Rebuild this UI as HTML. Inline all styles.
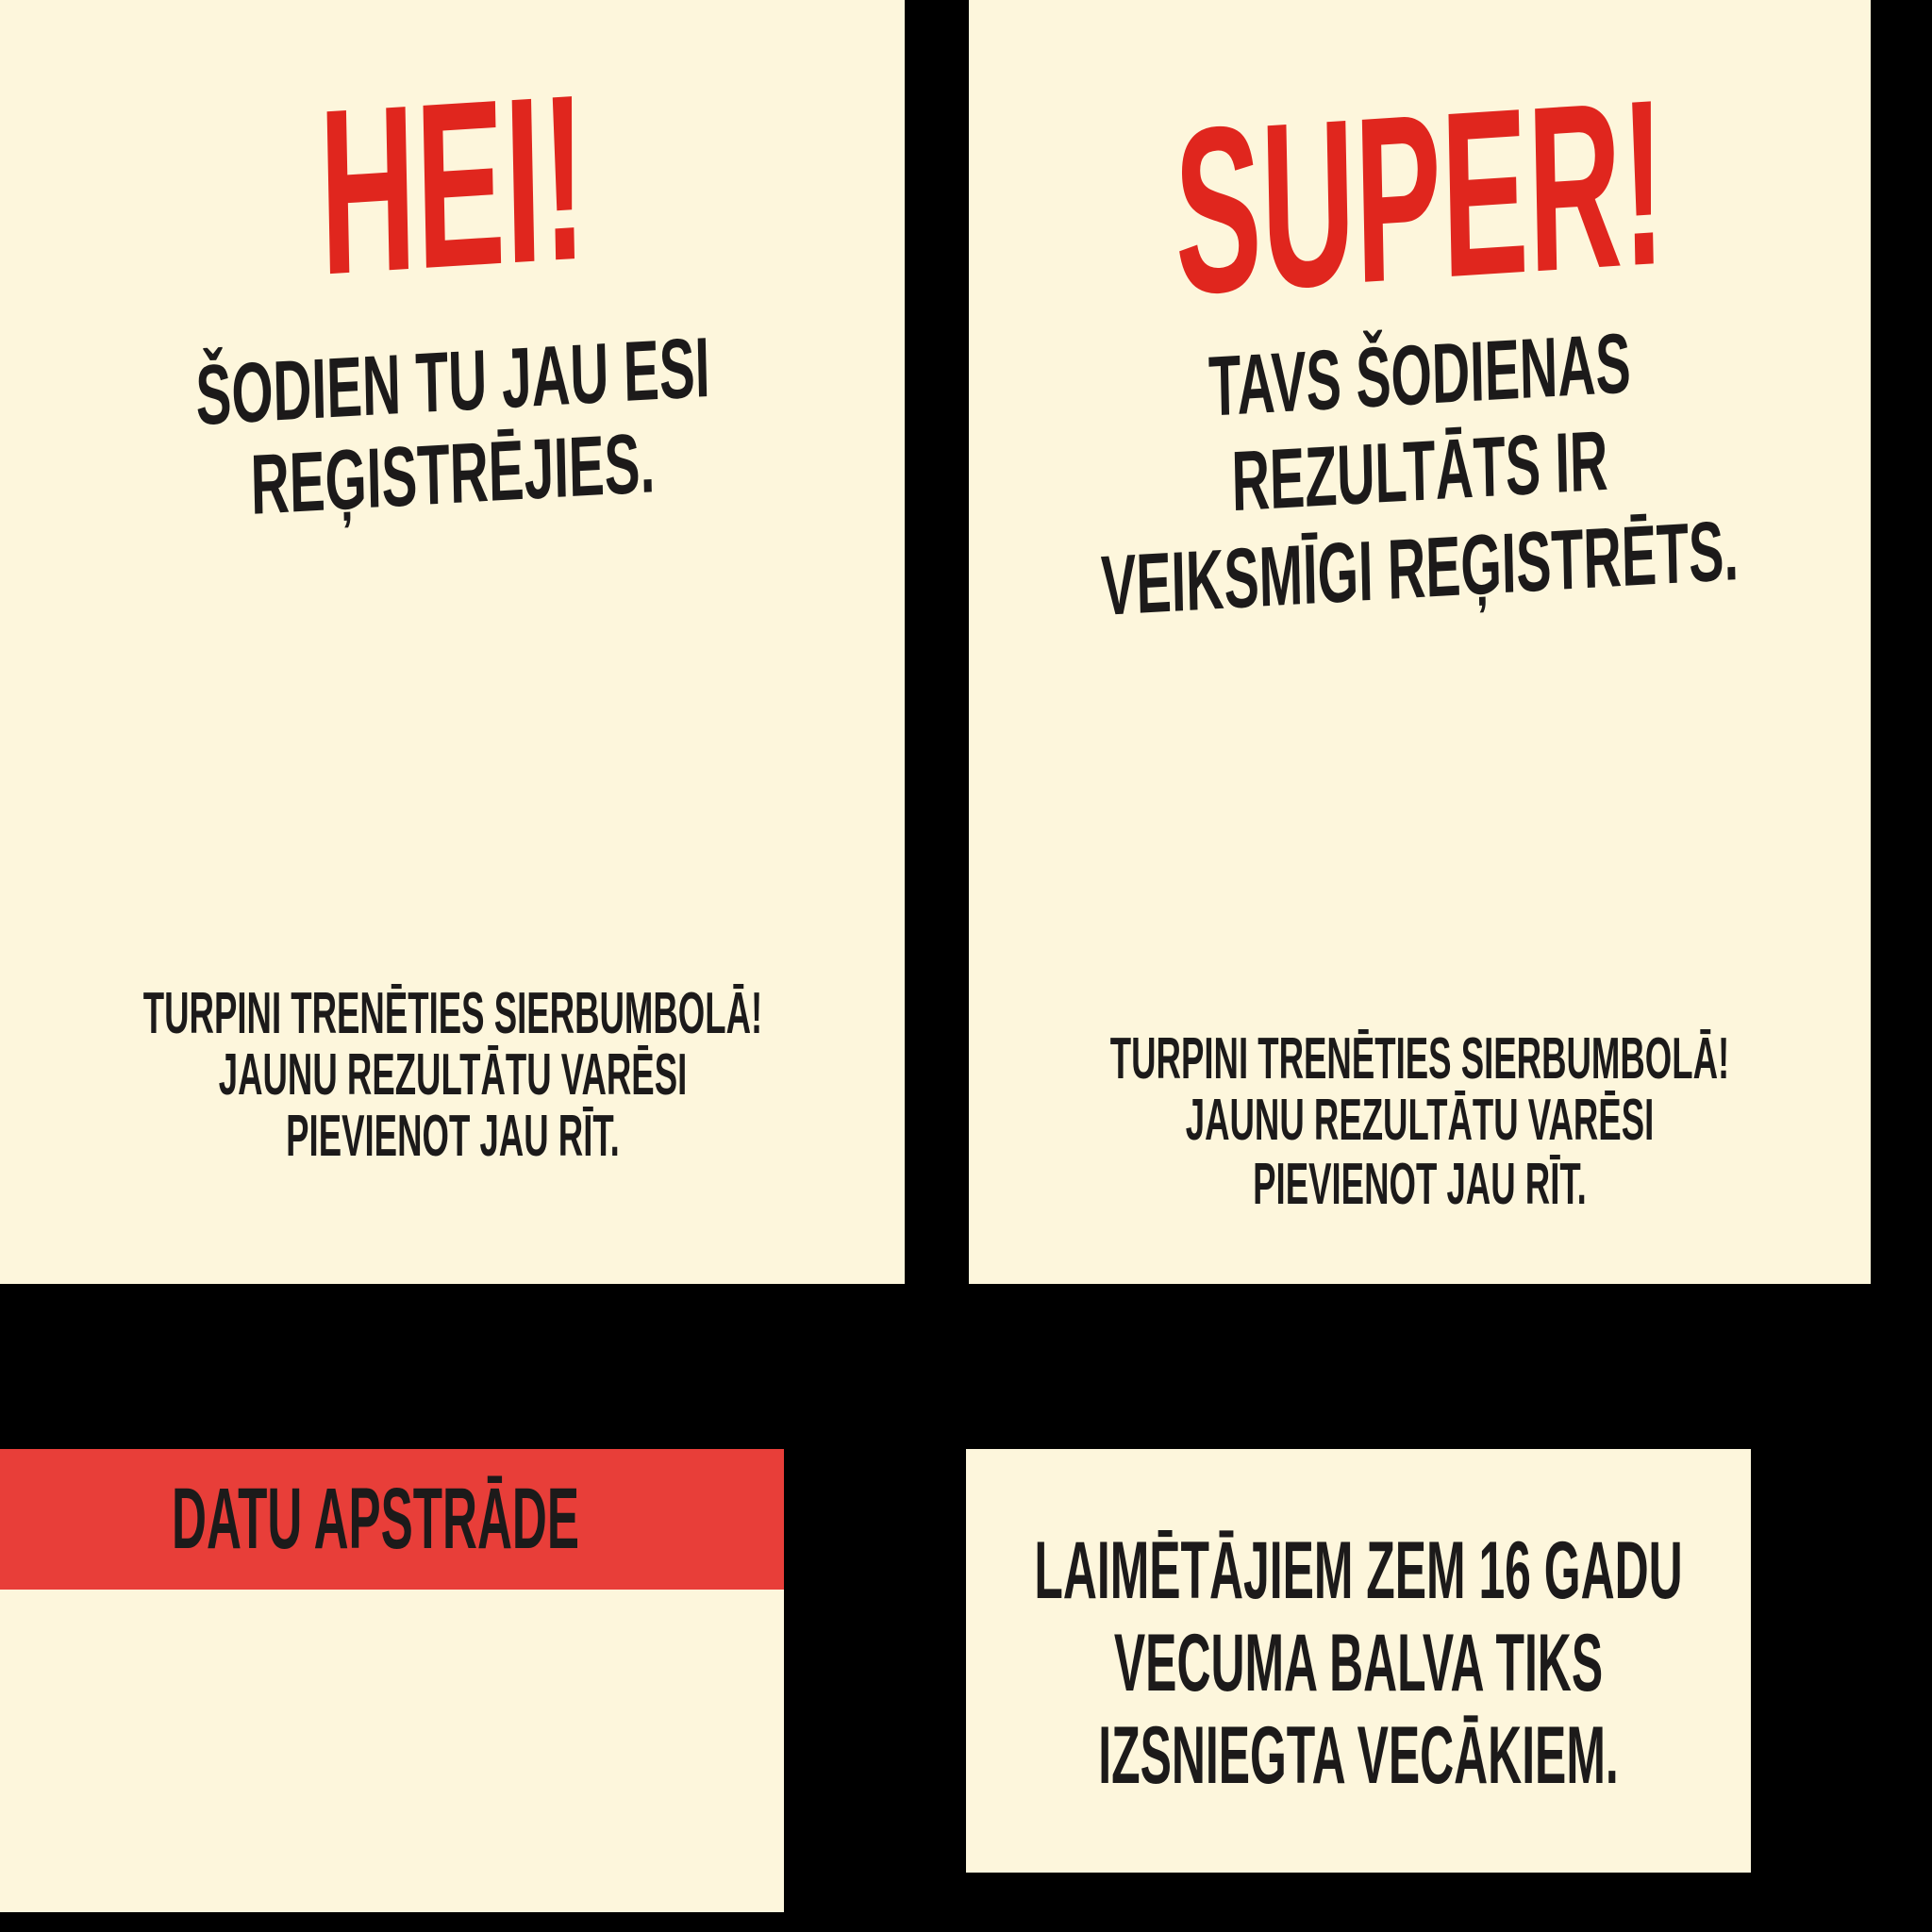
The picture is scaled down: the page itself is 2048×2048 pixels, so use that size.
<!DOCTYPE html>
<html><head><meta charset="utf-8"><style>
html,body{margin:0;padding:0;background:#000;width:2048px;height:2048px;overflow:hidden}
.p{position:absolute;background:#fdf6dc}
.t{position:absolute;left:50%;white-space:nowrap;font-family:"Liberation Sans Narrow","Liberation Sans",sans-serif;font-weight:bold;color:#1c1a1a;line-height:1;transform:translate(-50%,-50%) scaleX(.62)}
.r{color:#e0261e}
</style></head><body>
<div class="p" style="left:0;top:0;width:959px;height:1361px">
  <div class="t r" style="top:196px;font-size:250px;transform:translate(-50%,-50%) scaleX(.565) rotate(-2deg)">HEI!</div>
  <div class="t" style="top:405px;font-size:90px;transform:translate(-50%,-50%) scaleX(.63) rotate(-2deg)">ŠODIEN TU JAU ESI</div>
  <div class="t" style="top:503px;font-size:90px;transform:translate(-50%,-50%) scaleX(.63) rotate(-2deg)">REĢISTRĒJIES.</div>
  <div class="t" style="top:1075px;font-size:62px;transform:translate(-50%,-50%) scaleX(.59)">TURPINI TRENĒTIES SIERBUMBOLĀ!</div>
  <div class="t" style="top:1140px;font-size:62px;transform:translate(-50%,-50%) scaleX(.59)">JAUNU REZULTĀTU VARĒSI</div>
  <div class="t" style="top:1205px;font-size:62px;transform:translate(-50%,-50%) scaleX(.59)">PIEVIENOT JAU RĪT.</div>
</div>
<div class="p" style="left:1027px;top:0;width:956px;height:1361px">
  <div class="t r" style="top:209px;font-size:250px;transform:translate(-50%,-50%) scaleX(.55) rotate(-2deg)">SUPER!</div>
  <div class="t" style="top:398px;font-size:90px;transform:translate(-50%,-50%) scaleX(.62) rotate(-2deg)">TAVS ŠODIENAS</div>
  <div class="t" style="top:500px;font-size:90px;transform:translate(-50%,-50%) scaleX(.62) rotate(-2deg)">REZULTĀTS IR</div>
  <div class="t" style="top:603px;font-size:90px;transform:translate(-50%,-50%) scaleX(.62) rotate(-2deg)">VEIKSMĪGI REĢISTRĒTS.</div>
  <div class="t" style="top:1123px;font-size:62px;transform:translate(-50%,-50%) scaleX(.59)">TURPINI TRENĒTIES SIERBUMBOLĀ!</div>
  <div class="t" style="top:1188px;font-size:62px;transform:translate(-50%,-50%) scaleX(.59)">JAUNU REZULTĀTU VARĒSI</div>
  <div class="t" style="top:1256px;font-size:62px;transform:translate(-50%,-50%) scaleX(.59)">PIEVIENOT JAU RĪT.</div>
</div>
<div class="p" style="left:0;top:1536px;width:831px;height:491px">
  <div style="position:absolute;left:0;top:0;width:831px;height:149px;background:#e83e39"></div>
  <div class="t" style="top:74px;left:398px;font-size:92px;transform:translate(-50%,-50%) scaleX(.556)">DATU APSTRĀDE</div>
</div>
<div class="p" style="left:1024px;top:1536px;width:832px;height:449px">
  <div class="t" style="top:129px;font-size:86px;transform:translate(-50%,-50%) scaleX(.58)">LAIMĒTĀJIEM ZEM 16 GADU</div>
  <div class="t" style="top:227px;font-size:86px;transform:translate(-50%,-50%) scaleX(.58)">VECUMA BALVA TIKS</div>
  <div class="t" style="top:325px;font-size:86px;transform:translate(-50%,-50%) scaleX(.58)">IZSNIEGTA VECĀKIEM.</div>
</div>
</body></html>
